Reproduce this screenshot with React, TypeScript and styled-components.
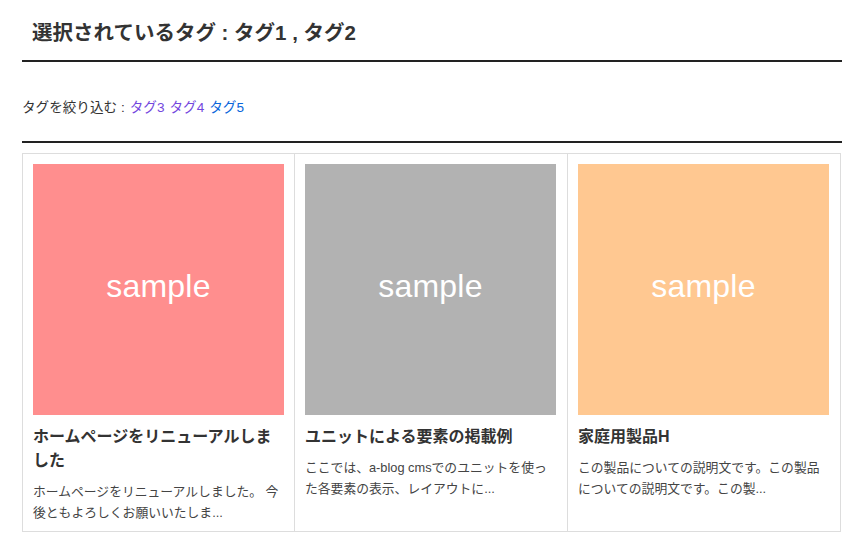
import React from "react";
import styled, { createGlobalStyle } from "styled-components";

const GlobalStyle = createGlobalStyle`
  html, body {
    margin: 0;
    padding: 0;
    background: #ffffff;
  }
  body {
    font-family: "Liberation Sans", "Noto Sans CJK JP", sans-serif;
    color: #333333;
  }
`;

const Page = styled.div`
  width: 820px;
  margin-left: 22px;
  padding-top: 15px;
`;

const Heading = styled.h1`
  margin: 0;
  padding: 0 0 10px 10px;
  font-size: 20.5px;
  line-height: 35px;
  font-weight: 700;
  color: #333333;
  border-bottom: 2px solid #222222;
`;

const FilterBar = styled.div`
  display: flex;
  align-items: center;
  gap: 5px;
  height: 81px;
  font-size: 13.6px;
  color: #333333;
  border-bottom: 2px solid #222222;
  padding-top: 9px;
  box-sizing: border-box;
`;

const TagLink = styled.a<{ $visited?: boolean }>`
  color: ${(p) => (p.$visited ? "#7347de" : "#0a66db")};
  text-decoration: none;
`;

const Grid = styled.div`
  display: grid;
  grid-template-columns: repeat(3, 273px);
  margin-top: 10px;
`;

const Card = styled.article<{ $first?: boolean }>`
  border: 1px solid #dddddd;
  border-left-width: ${(p) => (p.$first ? "1px" : "0")};
  padding: 10px 10px 8px;
  display: flex;
  flex-direction: column;
`;

const Thumb = styled.div<{ $bg: string }>`
  width: 251px;
  height: 251px;
  box-sizing: border-box;
  padding-bottom: 6px;
  background: ${(p) => p.$bg};
  display: flex;
  align-items: center;
  justify-content: center;
  color: #ffffff;
  font-family: "Liberation Sans", sans-serif;
  font-size: 32px;
  letter-spacing: 0.2px;
`;

const Title = styled.h2`
  margin: 10px 0 0;
  font-size: 16px;
  line-height: 24px;
  font-weight: 700;
  color: #333333;
`;

const Desc = styled.p`
  margin: 8px 0 0;
  font-size: 12.8px;
  line-height: 21px;
  color: #444444;
`;

const cards = [
  {
    bg: "#ff8e8e",
    title: "ホームページをリニューアルしました",
    desc: "ホームページをリニューアルしました。 今後ともよろしくお願いいたしま...",
  },
  {
    bg: "#b2b2b2",
    title: "ユニットによる要素の掲載例",
    desc: "ここでは、a-blog cmsでのユニットを使った各要素の表示、レイアウトに...",
  },
  {
    bg: "#ffc891",
    title: "家庭用製品H",
    desc: "この製品についての説明文です。この製品についての説明文です。この製...",
  },
];

export default function App() {
  return (
    <>
      <GlobalStyle />
      <Page>
        <Heading>選択されているタグ : タグ1 , タグ2</Heading>
        <FilterBar>
          <span>タグを絞り込む :</span>
          <TagLink href="#" $visited>タグ3</TagLink>
          <TagLink href="#" $visited>タグ4</TagLink>
          <TagLink href="#">タグ5</TagLink>
        </FilterBar>
        <Grid>
          {cards.map((c, i) => (
            <Card key={i} $first={i === 0}>
              <Thumb $bg={c.bg}>sample</Thumb>
              <Title>{c.title}</Title>
              <Desc>{c.desc}</Desc>
            </Card>
          ))}
        </Grid>
      </Page>
    </>
  );
}
